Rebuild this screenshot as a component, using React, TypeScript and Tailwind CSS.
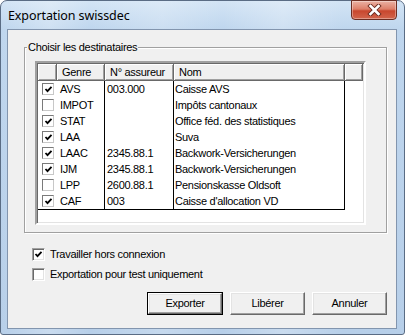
import React from "react";

const rows = [
  { c: true, g: "AVS", n: "003.000", nom: "Caisse AVS" },
  { c: false, g: "IMPOT", n: "", nom: "Impôts cantonaux" },
  { c: true, g: "STAT", n: "", nom: "Office féd. des statistiques" },
  { c: true, g: "LAA", n: "", nom: "Suva" },
  { c: true, g: "LAAC", n: "2345.88.1", nom: "Backwork-Versicherungen" },
  { c: true, g: "IJM", n: "2345.88.1", nom: "Backwork-Versicherungen" },
  { c: false, g: "LPP", n: "2600.88.1", nom: "Pensionskasse Oldsoft" },
  { c: true, g: "CAF", n: "003", nom: "Caisse d'allocation VD" },
];

function Check({ on }: { on: boolean }) {
  return on ? (
    <svg width="9" height="9" viewBox="0 0 9 9" className="block">
      <polyline points="1.5,4 3.5,6.2 7.5,1.8" fill="none" stroke="#000" strokeWidth="1.8" />
    </svg>
  ) : null;
}

function ListBox({ on }: { on: boolean }) {
  return (
    <div className="w-[12px] h-[12px] border border-t-[#7a7a7a] border-l-[#7a7a7a] border-r-[#c8c8c8] border-b-[#c8c8c8] bg-white flex items-center justify-center">
      <Check on={on} />
    </div>
  );
}

function SunkenBox({ on }: { on: boolean }) {
  return (
    <div className="w-[13px] h-[13px] border border-t-[#a0a0a0] border-l-[#a0a0a0] border-r-white border-b-white shadow-[inset_1px_1px_0_#696969,inset_-1px_-1px_0_#e3e3e3] bg-white flex items-center justify-center">
      <Check on={on} />
    </div>
  );
}

function Btn({ label, def }: { label: string; def?: boolean }) {
  const inner = (
    <div className="w-full h-full border border-t-white border-l-white border-r-[#696969] border-b-[#696969] shadow-[inset_-1px_-1px_0_#a0a0a0,inset_1px_1px_0_#e3e3e3] bg-[#f0f0f0] flex items-center justify-center">
      {label}
    </div>
  );
  return def ? (
    <div className="w-[76px] h-[23px] border border-black">{inner}</div>
  ) : (
    <div className="w-[75px] h-[23px]">{inner}</div>
  );
}

function Hd({ w, label }: { w: string; label?: string }) {
  return (
    <div
      className={`${w} h-[17px] border-r border-b border-r-[#696969] border-b-[#696969] shadow-[inset_1px_1px_0_#fff,inset_-1px_-1px_0_#a0a0a0] bg-[#f0f0f0] flex items-center pl-[5px] whitespace-nowrap`}
    >
      {label}
    </div>
  );
}

export default function App() {
  return (
    <div className="w-[405px] h-[335px] bg-white font-['Liberation_Sans',Arial,sans-serif] text-[11px] tracking-[-0.3px] text-black leading-[13px]">
      <div className="relative w-[405px] h-[335px] rounded-t-[7px] rounded-b-[3px] border border-[#5a6c84] bg-[linear-gradient(90deg,rgba(255,255,255,0)_0%,rgba(255,255,255,0.25)_12%,rgba(255,255,255,0)_22%,rgba(255,255,255,0.2)_40%,rgba(255,255,255,0)_55%,rgba(255,255,255,0.25)_70%,rgba(255,255,255,0)_85%),linear-gradient(180deg,#d3e4f5_0px,#bfd6ee_28px,#b7cfe9_100%)] pl-[6px] pr-[7px] pb-[5px] flex flex-col">
        <div className="h-[28px] flex items-center pl-[1px] font-['Noto_Sans',sans-serif] text-[12.5px] tracking-[-0.1px] text-black">
          Exportation swissdec
        </div>
        <div className="absolute left-[350px] top-[-1px] w-[46px] h-[20px] rounded-b-[4px] border border-[#6b2d22] bg-[linear-gradient(180deg,#eab2a4_0%,#dd7f69_45%,#c8472e_55%,#d2654c_100%)] shadow-[inset_0_0_0_1px_rgba(255,255,255,0.35)] flex items-center justify-center">
          <svg width="15" height="12" viewBox="0 0 15 12">
            <path d="M3.5 2 L11.5 10 M11.5 2 L3.5 10" stroke="#6a2b20" strokeWidth="4.4" strokeLinecap="square" />
            <path d="M3.5 2 L11.5 10 M11.5 2 L3.5 10" stroke="#fff" strokeWidth="2.6" strokeLinecap="square" />
          </svg>
        </div>
        <div className="flex-1 border border-[#8295ae] bg-[#f0f0f0] flex flex-col">
          <div className="relative ml-[16px] mt-[17px] w-[363px] h-[186px] border border-[#a0a0a0] shadow-[inset_1px_1px_0_#fff,1px_1px_0_#fff]">
            <span className="absolute left-[2px] top-[-7px] px-[1px] bg-[#f0f0f0] whitespace-nowrap">
              Choisir les destinataires
            </span>
            <div className="ml-[10px] mt-[13px] w-[331px] h-[164px] border-2 border-t-[#a0a0a0] border-l-[#a0a0a0] border-r-white border-b-white shadow-[inset_1px_1px_0_#696969,inset_-1px_-1px_0_#e3e3e3] bg-white">
              <div className="p-[1px] h-full w-full">
                <div className="flex">
                  <Hd w="w-[19px]" />
                  <Hd w="w-[48px]" label="Genre" />
                  <Hd w="w-[69px]" label="N° assureur" />
                  <Hd w="w-[171px]" label="Nom" />
                  <Hd w="flex-1" />
                </div>
                <div className="w-[307px] border-b border-black">
                  {rows.map((r) => (
                    <div key={r.g} className="flex h-[16px]">
                      <div className="w-[67px] border-r border-black flex items-center">
                        <div className="ml-[4px] mr-[6px]">
                          <ListBox on={r.c} />
                        </div>
                        <span>{r.g}</span>
                      </div>
                      <div className="w-[69px] border-r border-black flex items-center pl-[2px]">{r.n}</div>
                      <div className="w-[171px] border-r border-black flex items-center pl-[1px] whitespace-nowrap">{r.nom}</div>
                    </div>
                  ))}
                </div>
              </div>
            </div>
          </div>
          <div className="mt-[11px] ml-[24px] h-[20px] flex items-center gap-[5px]">
            <SunkenBox on={true} />
            <span>Travailler hors connexion</span>
          </div>
          <div className="ml-[24px] h-[20px] flex items-center gap-[5px]">
            <SunkenBox on={false} />
            <span>Exportation pour test uniquement</span>
          </div>
          <div className="mt-[8px] pr-[9px] flex justify-end gap-[7px]">
            <Btn label="Exporter" def />
            <Btn label="Libérer" />
            <Btn label="Annuler" />
          </div>
        </div>
      </div>
    </div>
  );
}
